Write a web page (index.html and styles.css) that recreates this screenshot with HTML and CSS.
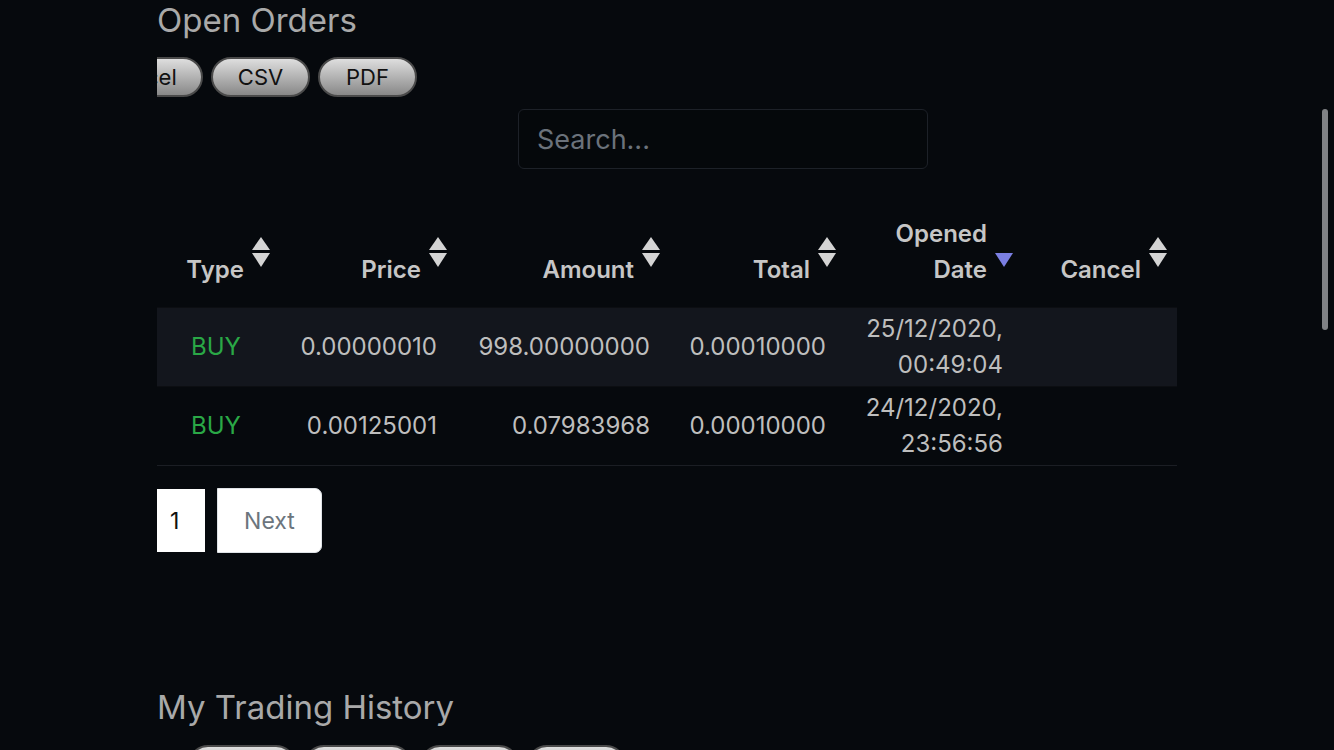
FILE: index.html
```html
<!DOCTYPE html>
<html lang="en">
<head>
<meta charset="utf-8">
<title>Open Orders</title>
<link rel="stylesheet" href="styles.css">
</head>
<body>
<div class="page">
  <section class="section">
    <h2 class="title">Open Orders</h2>
    <div class="btn-row btn-row--scrolled">
      <button class="dt-btn dt-btn--copy">Copy</button>
      <button class="dt-btn dt-btn--excel">Excel</button>
      <button class="dt-btn dt-btn--csv">CSV</button>
      <button class="dt-btn dt-btn--pdf">PDF</button>
    </div>
    <div class="search-row">
      <input class="search" type="text" placeholder="Search...">
    </div>
    <table class="orders">
      <colgroup>
        <col class="c-type"><col class="c-price"><col class="c-amount"><col class="c-total"><col class="c-date"><col class="c-cancel">
      </colgroup>
      <thead>
        <tr>
          <th class="th-left">Type<svg class="sort" viewBox="0 0 18 30"><polygon points="9,0 18,13 0,13"/><polygon points="0,16 18,16 9,30"/></svg></th>
          <th>Price<svg class="sort" viewBox="0 0 18 30"><polygon points="9,0 18,13 0,13"/><polygon points="0,16 18,16 9,30"/></svg></th>
          <th>Amount<svg class="sort" viewBox="0 0 18 30"><polygon points="9,0 18,13 0,13"/><polygon points="0,16 18,16 9,30"/></svg></th>
          <th>Total<svg class="sort" viewBox="0 0 18 30"><polygon points="9,0 18,13 0,13"/><polygon points="0,16 18,16 9,30"/></svg></th>
          <th>Opened<br>Date<svg class="sort sort--active" viewBox="0 0 18 30"><polygon points="0,16 18,16 9,30"/></svg></th>
          <th>Cancel<svg class="sort" viewBox="0 0 18 30"><polygon points="9,0 18,13 0,13"/><polygon points="0,16 18,16 9,30"/></svg></th>
        </tr>
      </thead>
      <tbody>
        <tr class="odd">
          <td class="buy">BUY</td>
          <td>0.00000010</td>
          <td>998.00000000</td>
          <td>0.00010000</td>
          <td>25/12/2020,<br>00:49:04</td>
          <td></td>
        </tr>
        <tr>
          <td class="buy">BUY</td>
          <td>0.00125001</td>
          <td>0.07983968</td>
          <td>0.00010000</td>
          <td>24/12/2020,<br>23:56:56</td>
          <td></td>
        </tr>
      </tbody>
    </table>
    <div class="pagination">
      <span class="page-cur">1</span>
      <span class="page-next">Next</span>
    </div>
  </section>
  <section class="section section--history">
    <h2 class="title">My Trading History</h2>
    <div class="btn-row btn-row--history">
      <button class="dt-btn dt-btn--copy">Copy</button>
      <button class="dt-btn dt-btn--excel">Excel</button>
      <button class="dt-btn dt-btn--csv">CSV</button>
      <button class="dt-btn dt-btn--pdf">PDF</button>
    </div>
  </section>
</div>
<div class="scroll-thumb"></div>
</body>
</html>
```
FILE: styles.css
```css
html, body {
  margin: 0;
  padding: 0;
  height: 100%;
  overflow: hidden;
  background: #06090d;
}
body {
  font-family: "Inter", "Noto Sans", sans-serif;
  color: #bdbdbd;
}
.page {
  margin-left: 157px;
  width: 1020px;
  overflow: hidden;
}
.title {
  margin: 0;
  font-size: 33px;
  line-height: 40px;
  font-weight: 400;
  color: #a9a9a9;
  white-space: nowrap;
}
.btn-row {
  display: flex;
  gap: 8px;
  margin-top: 17px;
  height: 40px;
}
.btn-row--scrolled { margin-left: -178px; }
.btn-row--history { margin-left: 31px; margin-top: 18px; }
.dt-btn {
  flex: none;
  height: 40px;
  box-sizing: border-box;
  border: 2px solid #4a4a4a;
  border-radius: 20px;
  background: linear-gradient(#dedede, #888);
  font-family: "Inter", sans-serif;
  font-size: 22px;
  color: #111;
  padding: 0;
}
.dt-btn--copy { width: 108px; }
.dt-btn--excel { width: 108px; }
.dt-btn--csv { width: 99px; }
.dt-btn--pdf { width: 99px; }
.search-row {
  margin-top: 12px;
  padding-left: 361px;
}
.search {
  display: block;
  width: 410px;
  height: 60px;
  box-sizing: border-box;
  border: 1px solid #1d2128;
  border-radius: 6px;
  background: #05080b;
  padding: 0 18px;
  font-family: "Inter", sans-serif;
  font-size: 27px;
  color: #c0c0c0;
  outline: none;
}
.search::placeholder { color: #6b727b; }
.orders {
  margin-top: 37px;
  width: 1020px;
  table-layout: fixed;
  border-collapse: collapse;
  font-size: 24px;
}
.c-type { width: 123px; }
.c-price { width: 177px; }
.c-amount { width: 213px; }
.c-total { width: 176px; }
.c-date { width: 177px; }
.c-cancel { width: 154px; }
.orders th {
  position: relative;
  text-align: right;
  vertical-align: bottom;
  font-weight: 600;
  color: #c6c6c6;
  line-height: 36px;
  padding: 10px 36px 19px 10px;
}
.sort {
  position: absolute;
  right: 10px;
  top: 31px;
  width: 18px;
  height: 30px;
  fill: #d4d4d4;
}
.sort--active { fill: #7b7fe2; }
.orders td {
  text-align: right;
  line-height: 36px;
  padding: 3px 20px 3px 10px;
  border-top: 1px solid #0c0e12;
  white-space: nowrap;
  color: #bebebe;
}
.orders tbody tr:last-child td { border-bottom: 1px solid #1b1e24; }
.orders tr.odd td { background: #13161d; }
.orders td.buy {
  text-align: left;
  padding-left: 34px;
  color: #2aa846;
}
.pagination {
  display: flex;
  align-items: center;
  gap: 12px;
  margin-top: 22px;
  height: 65px;
  font-size: 23px;
}
.page-cur {
  display: flex;
  align-items: center;
  box-sizing: border-box;
  width: 48px;
  height: 63px;
  padding-left: 13px;
  background: #fff;
  color: #111;
}
.page-next {
  display: flex;
  align-items: center;
  justify-content: center;
  box-sizing: border-box;
  width: 105px;
  height: 65px;
  background: #fff;
  border: 1px solid #dfe3e7;
  border-radius: 0 7px 7px 0;
  color: #6c757d;
}
.section--history { margin-top: 134px; }
.scroll-thumb {
  position: absolute;
  left: 1322px;
  top: 109px;
  width: 6px;
  height: 221px;
  border-radius: 3px;
  background: #808285;
}
```
